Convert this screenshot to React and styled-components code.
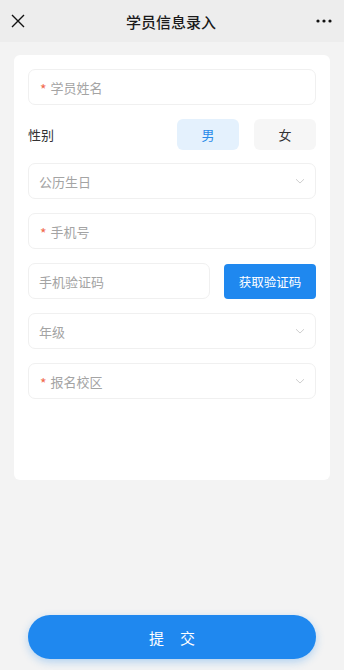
import React from 'react';
import styled, { createGlobalStyle } from 'styled-components';

const Global = createGlobalStyle`
  html, body { margin: 0; padding: 0; background: #f3f3f3; }
  body { font-family: "Noto Sans CJK SC", "Noto Sans", sans-serif; }
  * { box-sizing: border-box; }
`;

const Page = styled.div`
  height: 670px;
  display: flex;
  flex-direction: column;
  background: #f3f3f3;
`;

const TopBar = styled.div`
  height: 42px;
  background: #ededed;
  display: flex;
  align-items: center;
  justify-content: space-between;
  padding: 0 12px 0 10px;
`;

const BarTitle = styled.div`
  font-size: 15px;
  font-weight: 500;
  color: #1a1a1a;
`;

const IconBox = styled.div`
  width: 16px;
  height: 16px;
  display: flex;
  align-items: center;
  justify-content: center;
`;

const Card = styled.div`
  margin: 13px 14px 0;
  height: 425px;
  background: #fff;
  border-radius: 6px;
  padding: 14px 14px;
  display: flex;
  flex-direction: column;
  gap: 14px;
`;

const Field = styled.div`
  height: 36px;
  border: 1px solid #f0f0f0;
  border-radius: 7px;
  display: flex;
  align-items: center;
  padding: 0 10px 0 ${p => (p.$required ? '11px' : '10px')};
  font-size: 13px;
  color: #a4a4a4;
  flex: ${p => (p.$grow ? 1 : 'none')};
`;

const Star = styled.span`
  color: #f1694d;
  font-size: 14px;
  margin-right: 4px;
  position: relative;
  top: 2px;
`;

const Placeholder = styled.span`
  flex: 1;
`;

const Row = styled.div`
  display: flex;
  align-items: center;
  gap: 14px;
`;

const GenderRow = styled.div`
  height: 30px;
  display: flex;
  align-items: center;
`;

const Label = styled.div`
  flex: 1;
  font-size: 13px;
  color: #333;
`;

const Choice = styled.div`
  width: 62px;
  height: 31px;
  border-radius: 6px;
  display: flex;
  align-items: center;
  justify-content: center;
  font-size: 13px;
  margin-left: ${p => (p.$gap ? '15px' : '0')};
  background: ${p => (p.$active ? '#e4f1fd' : '#f6f6f6')};
  color: ${p => (p.$active ? '#2a8be9' : '#333')};
`;

const CodeButton = styled.div`
  width: 92px;
  height: 35px;
  border-radius: 4px;
  background: #1f88ef;
  color: #fff;
  font-size: 12.5px;
  display: flex;
  align-items: center;
  justify-content: center;
`;

const Footer = styled.div`
  margin-top: auto;
  padding: 0 28px 11px;
`;

const Submit = styled.div`
  height: 44px;
  border-radius: 22px;
  background: #1f88ef;
  color: #fff;
  font-size: 15px;
  display: flex;
  align-items: center;
  justify-content: center;
  letter-spacing: 16px;
  text-indent: 16px;
  box-shadow: 0 3px 8px rgba(31, 136, 239, 0.3);
`;

const Chevron = () => (
  <svg width="10" height="10" viewBox="0 0 10 10">
    <path d="M1 3.2 L5 7 L9 3.2" fill="none" stroke="#cfcfcf" strokeWidth="1" />
  </svg>
);

const Input = ({ text, required, select, grow }) => (
  <Field $required={required} $grow={grow}>
    {required && <Star>*</Star>}
    <Placeholder>{text}</Placeholder>
    {select && <Chevron />}
  </Field>
);

export default function App() {
  return (
    <Page>
      <Global />
      <TopBar>
        <IconBox>
          <svg width="14" height="14" viewBox="0 0 14 14">
            <path d="M1 1 L13 13 M13 1 L1 13" stroke="#111" strokeWidth="1.4" fill="none" />
          </svg>
        </IconBox>
        <BarTitle>学员信息录入</BarTitle>
        <IconBox>
          <svg width="16" height="4" viewBox="0 0 16 4">
            <circle cx="2" cy="2" r="1.6" fill="#111" />
            <circle cx="8" cy="2" r="1.6" fill="#111" />
            <circle cx="14" cy="2" r="1.6" fill="#111" />
          </svg>
        </IconBox>
      </TopBar>
      <Card>
        <Input text="学员姓名" required />
        <GenderRow>
          <Label>性别</Label>
          <Choice $active>男</Choice>
          <Choice $gap>女</Choice>
        </GenderRow>
        <Input text="公历生日" select />
        <Input text="手机号" required />
        <Row>
          <Input text="手机验证码" grow />
          <CodeButton>获取验证码</CodeButton>
        </Row>
        <Input text="年级" select />
        <Input text="报名校区" required select />
      </Card>
      <Footer>
        <Submit>提交</Submit>
      </Footer>
    </Page>
  );
}
